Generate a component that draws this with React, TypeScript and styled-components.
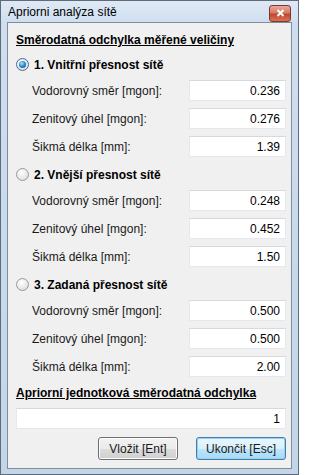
import * as React from 'react'
import styled, {createGlobalStyle} from 'styled-components'

const GlobalStyle = createGlobalStyle`
  html, body {
    margin: 0;
    padding: 0;
    background: #ffffff;
  }
  body {
    font-family: "Liberation Sans", Arial, sans-serif;
    font-size: 12px;
  }
`

const Window = styled.div`
  width: 299px;
  height: 475px;
  box-sizing: border-box;
  border: 1px solid #5d6b7a;
  background: linear-gradient(to bottom, #dfe9f5 0px, #cfdeef 22px, #c4d5ea 100%);
  padding: 0 6px 5px 6px;
  display: flex;
  flex-direction: column;
`

const TitleBar = styled.div`
  height: 21px;
  display: flex;
  align-items: center;
  justify-content: space-between;
  padding-left: 1px;
`

const Title = styled.span`
  color: #000;
  font-size: 12px;
`

const CloseButton = styled.div`
  width: 20px;
  height: 15px;
  margin-top: 3px;
  margin-right: 1px;
  border: 1px solid #7a3a32;
  border-radius: 3px;
  background: linear-gradient(to bottom, #e8a89a 0%, #d87a66 45%, #c4452e 55%, #d4745a 100%);
  display: flex;
  align-items: center;
  justify-content: center;
`

const Client = styled.div`
  flex: 1;
  border: 1px solid #7f8d9c;
  background: #f0f0f0;
  padding: 9px 5px 0 8px;
  display: flex;
  flex-direction: column;
`

const Heading = styled.div<{$spaced?: boolean}>`
  height: 16px;
  line-height: 16px;
  font-weight: bold;
  text-decoration: underline;
  color: #000;
  margin-top: ${(p) => (p.$spaced ? 8 : 0)}px;
`

const Section = styled.div<{$first?: boolean}>`
  display: flex;
  flex-direction: column;
  gap: 7px;
  margin-top: ${(p) => (p.$first ? 6 : 7)}px;
`

const RadioRow = styled.label`
  height: 21px;
  display: flex;
  align-items: center;
  gap: 5px;
  font-weight: bold;
  color: #000;
  margin-bottom: -2px;
`

const RadioDot = styled.span<{$checked?: boolean}>`
  width: 11px;
  height: 11px;
  border-radius: 50%;
  border: 1px solid ${(p) => (p.$checked ? '#3c6f9c' : '#9a9a9a')};
  background: radial-gradient(circle at 40% 35%, #ffffff 0%, #e6e6e6 60%, #cfcfcf 100%);
  display: flex;
  align-items: center;
  justify-content: center;
  flex-shrink: 0;

  &::after {
    content: '';
    width: 7px;
    height: 7px;
    border-radius: 50%;
    display: ${(p) => (p.$checked ? 'block' : 'none')};
    background: radial-gradient(circle at 40% 35%, #b9e4ff 0%, #2f8fd0 45%, #124c7c 100%);
  }
`

const FieldRow = styled.div`
  height: 21px;
  display: flex;
  align-items: center;
  padding-left: 16px;
`

const FieldLabel = styled.span`
  flex: 1;
  color: #1a1a1a;
`

const NumberBox = styled.div<{$wide?: boolean}>`
  width: ${(p) => (p.$wide ? 'auto' : '97px')};
  flex: ${(p) => (p.$wide ? 1 : 'none')};
  height: 21px;
  box-sizing: border-box;
  background: #ffffff;
  border: 1px solid #e3e9ef;
  border-top-color: #d5d9de;
  padding-right: 5px;
  display: flex;
  align-items: center;
  justify-content: flex-end;
  color: #000;
`

const WideRow = styled.div`
  display: flex;
  margin-top: 7px;
`

const ButtonBar = styled.div`
  display: flex;
  justify-content: flex-end;
  gap: 18px;
  margin-top: 8px;
`

const Button = styled.div<{$default?: boolean}>`
  width: ${(p) => (p.$default ? 90 : 80)}px;
  height: 23px;
  box-sizing: border-box;
  border: 1px solid ${(p) => (p.$default ? '#3c7fb1' : '#707070')};
  border-radius: 3px;
  display: flex;
  align-items: center;
  justify-content: center;
  color: #1a1a1a;
  background: ${(p) =>
    p.$default
      ? 'linear-gradient(to bottom, #eaf6fd 0%, #d9f0fc 50%, #bee6fd 50%, #a7d9f5 100%)'
      : 'linear-gradient(to bottom, #f2f2f2 0%, #ebebeb 50%, #dddddd 50%, #cfcfcf 100%)'};
  box-shadow: inset 0 0 0 1px ${(p) => (p.$default ? '#98d1ef' : '#fbfbfb')};
`

type Field = {label: string; value: string}

const sections: {title: string; checked: boolean; fields: Field[]}[] = [
  {
    title: '1. Vnitřní přesnost sítě',
    checked: true,
    fields: [
      {label: 'Vodorovný směr [mgon]:', value: '0.236'},
      {label: 'Zenitový úhel [mgon]:', value: '0.276'},
      {label: 'Šikmá délka [mm]:', value: '1.39'},
    ],
  },
  {
    title: '2. Vnější přesnost sítě',
    checked: false,
    fields: [
      {label: 'Vodorovný směr [mgon]:', value: '0.248'},
      {label: 'Zenitový úhel [mgon]:', value: '0.452'},
      {label: 'Šikmá délka [mm]:', value: '1.50'},
    ],
  },
  {
    title: '3. Zadaná přesnost sítě',
    checked: false,
    fields: [
      {label: 'Vodorovný směr [mgon]:', value: '0.500'},
      {label: 'Zenitový úhel [mgon]:', value: '0.500'},
      {label: 'Šikmá délka [mm]:', value: '2.00'},
    ],
  },
]

export default function App() {
  return (
    <>
      <GlobalStyle />
      <Window>
        <TitleBar>
          <Title>Apriorni analýza sítě</Title>
          <CloseButton>
            <svg width="9" height="8" viewBox="0 0 9 8">
              <path d="M1.5 1 L7.5 7 M7.5 1 L1.5 7" stroke="#ffffff" strokeWidth="2" />
            </svg>
          </CloseButton>
        </TitleBar>
        <Client>
          <Heading>Směrodatná odchylka měřené veličiny</Heading>
          {sections.map((s, i) => (
            <Section key={s.title} $first={i === 0}>
              <RadioRow>
                <RadioDot $checked={s.checked} />
                {s.title}
              </RadioRow>
              {s.fields.map((f) => (
                <FieldRow key={f.label}>
                  <FieldLabel>{f.label}</FieldLabel>
                  <NumberBox>{f.value}</NumberBox>
                </FieldRow>
              ))}
            </Section>
          ))}
          <Heading $spaced>Apriorní jednotková směrodatná odchylka</Heading>
          <WideRow>
            <NumberBox $wide>1</NumberBox>
          </WideRow>
          <ButtonBar>
            <Button>Vložit [Ent]</Button>
            <Button $default>Ukončit [Esc]</Button>
          </ButtonBar>
        </Client>
      </Window>
    </>
  )
}
